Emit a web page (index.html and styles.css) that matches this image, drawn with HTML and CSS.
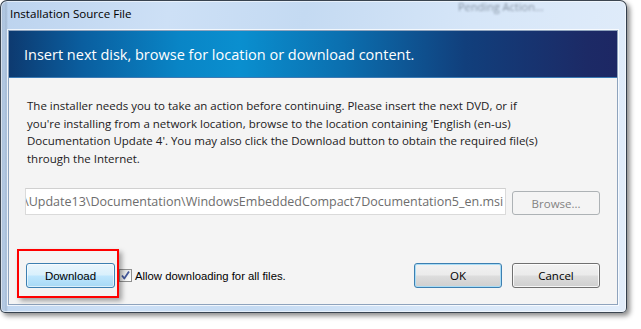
FILE: index.html
```html
<!DOCTYPE html>
<html>
<head>
<meta charset="utf-8">
<link rel="stylesheet" href="styles.css">
</head>
<body>
<div class="window">
  <div class="titlebar">
    <span class="title">Installation Source File</span>
    <span class="ghost">Pending Action...</span>
  </div>
  <div class="client">
    <div class="banner">Insert next disk, browse for location or download content.</div>
    <p class="msg">The installer needs you to take an action before continuing. Please insert the next DVD, or if<br>you're installing from a network location, browse to the location containing 'English (en-us)<br>Documentation Update 4'. You may also click the Download button to obtain the required file(s)<br>through the Internet.</p>
    <div class="path-row">
      <div class="path"><span class="path-text">:\Update13\Documentation\WindowsEmbeddedCompact7Documentation5_en.msi</span></div>
      <button class="btn btn-disabled">Browse...</button>
    </div>
    <div class="action-row">
      <div class="dl-wrap">
        <button class="btn btn-hover btn-sans">Download</button>
        <span class="annot"></span>
      </div>
      <label class="check">
        <span class="box"><svg width="11" height="11" viewBox="0 0 11 11"><path d="M2 5.5 L4.3 8.5 L9 1.5" fill="none" stroke="#44589a" stroke-width="1.8" stroke-linejoin="round"/></svg></span>
        <span class="check-label">Allow downloading for all files.</span>
      </label>
      <span class="spacer"></span>
      <button class="btn btn-default">OK</button>
      <button class="btn">Cancel</button>
    </div>
  </div>
</div>
</body>
</html>
```

FILE: styles.css
```css
html, body {
  margin: 0;
  padding: 0;
  background: #ffffff;
}
body {
  width: 641px;
  height: 329px;
  overflow: hidden;
  font-family: "Open Sans", "Noto Sans", sans-serif;
}
.window {
  box-sizing: border-box;
  width: 627px;
  height: 313px;
  border: 1px solid rgba(30, 40, 50, 0.85);
  border-radius: 7px 7px 5px 5px;
  padding: 0 8px 7px 7px;
  display: flex;
  flex-direction: column;
  background:
    linear-gradient(90deg, rgba(120,140,165,0.35) 0px, rgba(120,140,165,0.15) 3px, rgba(120,140,165,0.35) 5px, rgba(0,0,0,0) 7px),
    linear-gradient(100deg, #bcd3ee 0%, #cde0f6 25%, #c4daf2 45%, #d6e6f8 70%, #e2edfa 100%);
  box-shadow: 3px 3px 5px rgba(0, 0, 0, 0.45), inset 0 0 0 1px rgba(255,255,255,0.55);
}
.titlebar {
  height: 29px;
  flex: none;
  display: flex;
  align-items: flex-start;
  position: relative;
}
.title {
  margin-left: 2px;
  margin-top: 5px;
  font-size: 11.6px;
  color: #000;
}
.ghost {
  position: absolute;
  left: 450px;
  top: -2px;
  font-size: 11px;
  color: rgba(70, 80, 95, 0.55);
  filter: blur(1.2px);
}
.client {
  flex: 1;
  border: 1px solid #8ea3bd;
  box-shadow: 0 0 0 1px rgba(255,255,255,0.75);
  background: #f4f4f4;
  display: flex;
  flex-direction: column;
}
.banner {
  height: 47px;
  flex: none;
  box-sizing: border-box;
  padding-left: 15px;
  display: flex;
  align-items: center;
  color: #ffffff;
  font-size: 14.5px;
  background: linear-gradient(90deg, #0d3a70 0%, #0a5e9f 12%, #0985c6 28%, #0a8fcf 38%, #0b6faf 55%, #113f7c 75%, #1c2a66 95%, #1d2764 100%);
  border-bottom: 1px solid #3b7ab4;
}
.msg {
  margin: 19px 0 0 18px;
  font-size: 11.5px;
  line-height: 17.5px;
  color: #1c1a22;
}
.path-row {
  margin: 21px 17px 0 16px;
  display: flex;
  align-items: center;
  gap: 6px;
}
.path {
  box-sizing: border-box;
  width: 482px;
  height: 27px;
  background: #ffffff;
  border: 1px solid #dadada;
  border-top-color: #d0d0d0;
  display: flex;
  justify-content: flex-end;
  align-items: center;
  overflow: hidden;
  padding-right: 2px;
}
.path-text {
  white-space: nowrap;
  font-size: 12.5px;
  color: #6d6d6d;
}
.btn {
  box-sizing: border-box;
  width: 88px;
  height: 25px;
  border: 1px solid #707070;
  border-radius: 3px;
  padding: 0;
  font-family: "Open Sans", "Noto Sans", sans-serif;
  font-size: 11.5px;
  color: #000;
  background: linear-gradient(180deg, #f2f2f2 0%, #ebebeb 48%, #dddddd 52%, #cfcfcf 100%);
  box-shadow: inset 0 0 0 1px rgba(255,255,255,0.8);
}
.btn-disabled {
  width: 88px;
  height: 24px;
  margin-top: 3px;
  border-color: #adb2b5;
  background: #f4f4f4;
  color: #838383;
  box-shadow: none;
}
.btn-default {
  border-color: #3c7fb1;
  box-shadow: inset 0 0 0 1px #a9dcf5;
}
.btn-hover {
  width: 89px;
  border-color: #3c7fb1;
  background: linear-gradient(180deg, #eaf6fd 0%, #d9f0fc 48%, #bee6fd 52%, #a7d9f5 100%);
  box-shadow: inset 0 0 0 1px rgba(255,255,255,0.6);
}
.btn-sans {
  font-family: "Liberation Sans", Arial, sans-serif;
  font-size: 11.5px;
}
.action-row {
  margin: 48px 17px 0 17px;
  display: flex;
  align-items: center;
}
.dl-wrap {
  position: relative;
  display: flex;
}
.annot {
  position: absolute;
  left: -9px;
  top: -14px;
  width: 102px;
  height: 49px;
  box-sizing: border-box;
  border: 2px solid #ff0000;
  box-shadow: 3px 3px 5px rgba(0,0,0,0.35);
  pointer-events: none;
}
.check {
  display: flex;
  align-items: center;
  margin-left: 4px;
}
.box {
  box-sizing: border-box;
  width: 13px;
  height: 13px;
  border: 1px solid #8f8f8f;
  background: linear-gradient(135deg, #dcdcdc, #ffffff);
  display: flex;
  align-items: center;
  justify-content: center;
}
.check-label {
  margin-left: 3px;
  font-family: "Liberation Sans", Arial, sans-serif;
  font-size: 11.3px;
  color: #000;
}
.spacer {
  flex: 1;
}
.btn-default + .btn {
  margin-left: 10px;
}
```
